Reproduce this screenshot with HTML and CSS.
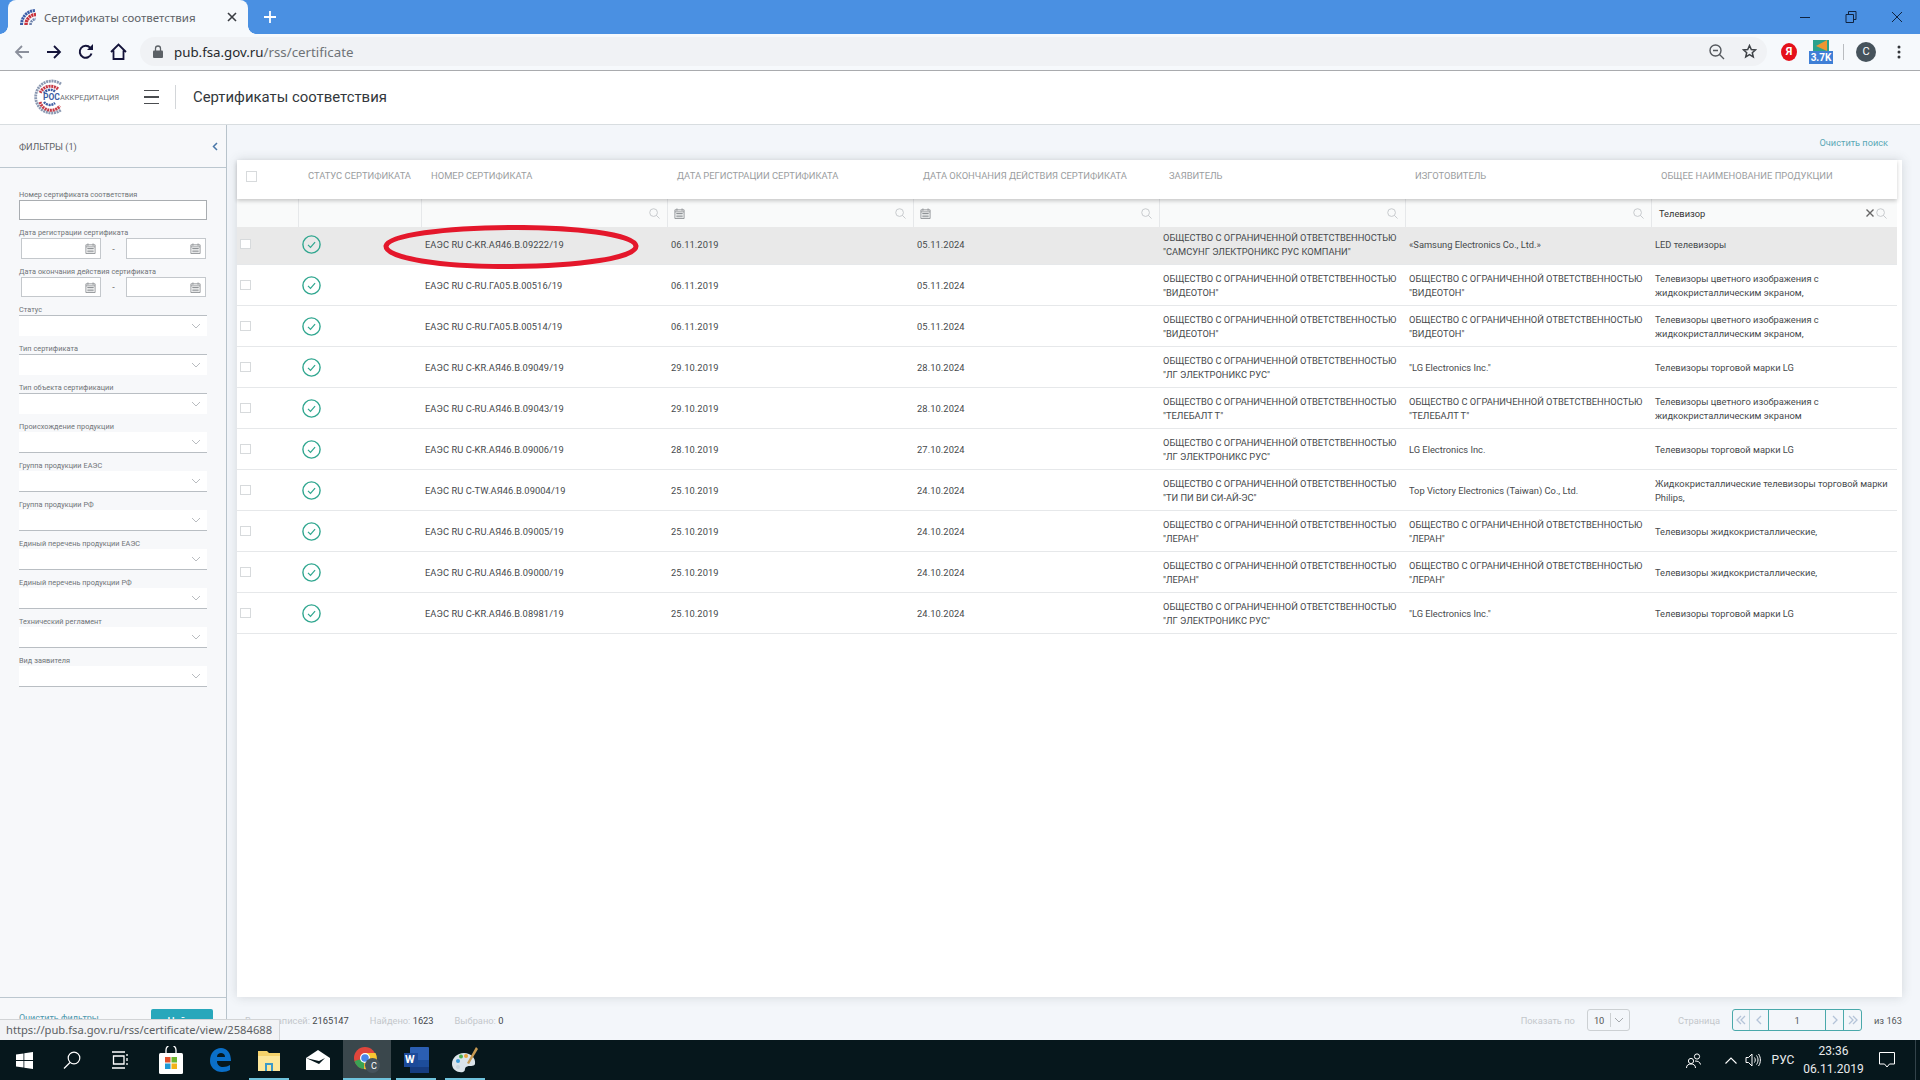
FILE: index.html
```html
<!DOCTYPE html>
<html lang="ru">
<head>
<meta charset="utf-8">
<title>Сертификаты соответствия</title>
<link rel="stylesheet" href="styles.css">
</head>
<body>
<svg class="sprite" aria-hidden="true">
  <symbol id="search" viewBox="0 0 12 12"><circle cx="5" cy="5" r="4.2" fill="none" stroke="currentColor"/><path d="M8 8l3.5 3.5" stroke="currentColor" fill="none"/></symbol>
  <symbol id="cal" viewBox="0 0 12 12"><path d="M1 2h10v9.5H1zM1 4.2h10M3.2.5v2.5M8.8.5v2.5" fill="none" stroke="currentColor"/><path d="M2.5 5.5h7v1h-7zM2.5 7.3h7v1h-7zM2.5 9.1h7v1h-7z" fill="currentColor"/></symbol>
  <symbol id="chev" viewBox="0 0 10 6"><path d="M1 1l4 4 4-4" fill="none" stroke="currentColor"/></symbol>
  <symbol id="ok" viewBox="0 0 19 19"><circle cx="9.5" cy="9.5" r="8.6" fill="none" stroke="#2fa68f" stroke-width="1.4"/><path d="M6 9.8l2.5 2.5 4.6-5.2" fill="none" stroke="#2fa68f" stroke-width="1.2"/></symbol>
  <symbol id="pg-first" viewBox="0 0 10 10"><path d="M5 1L1 5l4 4M9 1L5 5l4 4" fill="none" stroke="currentColor" stroke-width="1.3"/></symbol>
  <symbol id="pg-prev" viewBox="0 0 10 10"><path d="M7 1L3 5l4 4" fill="none" stroke="currentColor" stroke-width="1.3"/></symbol>
  <symbol id="pg-next" viewBox="0 0 10 10"><path d="M3 1l4 4-4 4" fill="none" stroke="currentColor" stroke-width="1.3"/></symbol>
  <symbol id="pg-last" viewBox="0 0 10 10"><path d="M1 1l4 4-4 4M5 1l4 4-4 4" fill="none" stroke="currentColor" stroke-width="1.3"/></symbol>
</svg>

<header class="tabstrip">
  <div class="tab">
    <svg class="favicon" width="16" height="16" viewBox="0 0 16 16"><path d="M1.500 16C1.500 8 7 2 15 1.500" fill="none" stroke="#3c5ea8" stroke-width="3" stroke-dasharray="2.200 .6"/><path d="M6 16C6 10 10 6 16 5.500" fill="none" stroke="#c8323c" stroke-width="3.400" stroke-dasharray="2.200 .6"/><path d="M10.500 16C10.500 12.500 12.500 10.500 16 10" fill="none" stroke="#6f84ad" stroke-width="2.600" stroke-dasharray="2 .8"/></svg>
    <span class="tab-title">Сертификаты соответствия</span>
    <svg class="tab-close" width="10" height="10" viewBox="0 0 10 10"><path d="M1 1l8 8M9 1l-8 8" stroke="#3a3d42" stroke-width="1.6"/></svg>
  </div>
  <svg class="new-tab" width="12" height="12" viewBox="0 0 12 12"><path d="M6 0v12M0 6h12" stroke="#fff" stroke-width="1.8"/></svg>
  <div class="win-controls">
    <svg width="12" height="12" viewBox="0 0 12 12"><path d="M1 6.5h10" stroke="#10233f" stroke-width="1"/></svg>
    <svg width="12" height="12" viewBox="0 0 12 12"><path d="M1 3.5h7.500v8H1zM3.500 3.500V.5H11v8H8.500" fill="none" stroke="#10233f"/></svg>
    <svg width="12" height="12" viewBox="0 0 12 12"><path d="M1 1l10 10M11 1L1 11" stroke="#10233f"/></svg>
  </div>
</header>

<nav class="toolbar">
  <svg class="nav-icon" width="16" height="16" viewBox="0 0 16 16"><path d="M15 8H2M8 2L2 8l6 6" fill="none" stroke="#8b909c" stroke-width="1.8"/></svg>
  <svg class="nav-icon" width="16" height="16" viewBox="0 0 16 16"><path d="M1 8h13M8 2l6 6-6 6" fill="none" stroke="#14143a" stroke-width="1.8"/></svg>
  <svg class="nav-icon" width="16" height="16" viewBox="0 0 16 16"><path d="M13.500 9.500A6 6 0 1 1 12.300 3.800" fill="none" stroke="#14143a" stroke-width="2"/><path d="M9 6h6V0z" fill="#14143a"/></svg>
  <svg class="nav-icon" width="17" height="17" viewBox="0 0 17 17"><path d="M1 9l7.500-7.500L16 9M3.500 7.500V16h10V7.500" fill="none" stroke="#14143a" stroke-width="1.800"/></svg>
  <div class="omnibox">
    <svg class="lock" width="10" height="13" viewBox="0 0 10 13"><path d="M2.500 6V3.500a2.500 2.500 0 0 1 5 0V6" fill="none" stroke="#5c6166" stroke-width="1.300"/><rect y="5.500" width="10" height="7.500" rx="1" fill="#5c6166"/></svg>
    <span class="url"><b>pub.fsa.gov.ru</b>/rss/certificate</span>
    <svg class="omni-zoom" width="16" height="16" viewBox="0 0 16 16"><circle cx="6.500" cy="6.500" r="5.500" fill="none" stroke="#55595e" stroke-width="1.400"/><path d="M10.500 10.500L15 15M4 6.500h5" stroke="#55595e" stroke-width="1.400"/></svg>
    <svg class="omni-star" width="15" height="15" viewBox="0 0 15 15"><path d="M7.500 1.500l1.800 4 4.200.4-3.200 2.800 1 4.300-3.800-2.300-3.800 2.300 1-4.300L1.500 5.900l4.200-.4z" fill="none" stroke="#3e4247" stroke-width="1.500"/></svg>
  </div>
  <span class="ya">Я</span>
  <span class="ext"><svg width="16" height="11" viewBox="0 0 16 11"><rect width="16" height="11" fill="#2ba18c"/><path d="M14 0v11L3 6z" fill="#ef9632"/></svg><em>3.7K</em></span>
  <i class="tb-divider"></i>
  <span class="avatar">C</span>
  <svg class="kebab" width="4" height="14" viewBox="0 0 4 14"><circle cx="2" cy="2" r="1.500" fill="#33363a"/><circle cx="2" cy="7" r="1.500" fill="#33363a"/><circle cx="2" cy="12" r="1.500" fill="#33363a"/></svg>
</nav>

<div class="site-header">
  <div class="logo">
    <svg width="36" height="36" viewBox="0 0 36 36"><path d="M28 5A16 16 0 1 0 28 31" fill="none" stroke="#8b99b2" stroke-width="2.800" stroke-dasharray="2 .7"/><path d="M25 10A11.500 11.500 0 0 0 7 14M7 23A11.500 11.500 0 0 0 27 27" fill="none" stroke="#c63a46" stroke-width="3" stroke-dasharray="2 .7"/><path d="M22 12.500A7.500 7.500 0 0 0 11 14M11 23A7.500 7.500 0 0 0 22 24" fill="none" stroke="#3d5ea4" stroke-width="2.400" stroke-dasharray="2 .7"/></svg>
    <span class="logo-text"><b>РОС</b>АККРЕДИТАЦИЯ</span>
  </div>
  <div class="burger"><i></i><i></i><i></i></div>
  <i class="hdr-divider"></i>
  <h1 class="page-title">Сертификаты соответствия</h1>
</div>

<div class="workspace">
  <aside class="sidebar">
    <div class="side-head">
      <span>ФИЛЬТРЫ (1)</span>
      <svg width="6" height="9" viewBox="0 0 6 9"><path d="M5 1L1.500 4.500 5 8" fill="none" stroke="#4a77a8" stroke-width="1.500"/></svg>
    </div>
    <div class="side-fields">
      <label class="field"><span>Номер сертификата соответствия</span><div class="text-input"></div></label>
      <div class="field"><span>Дата регистрации сертификата</span>
        <div class="date-row tall"><div class="date-input"><svg width="11" height="11" class="cal"><use href="#cal"/></svg></div><i class="dash">-</i><div class="date-input"><svg width="11" height="11" class="cal"><use href="#cal"/></svg></div></div></div>
      <div class="field"><span>Дата окончания действия сертификата</span>
        <div class="date-row"><div class="date-input"><svg width="11" height="11" class="cal"><use href="#cal"/></svg></div><i class="dash">-</i><div class="date-input"><svg width="11" height="11" class="cal"><use href="#cal"/></svg></div></div></div>
      <div class="field"><span>Статус</span><div class="select top"><svg width="10" height="6"><use href="#chev"/></svg></div></div>
      <div class="field"><span>Тип сертификата</span><div class="select top"><svg width="10" height="6"><use href="#chev"/></svg></div></div>
      <div class="field"><span>Тип объекта сертификации</span><div class="select top"><svg width="10" height="6"><use href="#chev"/></svg></div></div>
      <div class="field"><span>Происхождение продукции</span><div class="select"><svg width="10" height="6"><use href="#chev"/></svg></div></div>
      <div class="field"><span>Группа продукции ЕАЭС</span><div class="select"><svg width="10" height="6"><use href="#chev"/></svg></div></div>
      <div class="field"><span>Группа продукции РФ</span><div class="select"><svg width="10" height="6"><use href="#chev"/></svg></div></div>
      <div class="field"><span>Единый перечень продукции ЕАЭС</span><div class="select"><svg width="10" height="6"><use href="#chev"/></svg></div></div>
      <div class="field"><span>Единый перечень продукции РФ</span><div class="select"><svg width="10" height="6"><use href="#chev"/></svg></div></div>
      <div class="field"><span>Технический регламент</span><div class="select"><svg width="10" height="6"><use href="#chev"/></svg></div></div>
      <div class="field"><span>Вид заявителя</span><div class="select"><svg width="10" height="6"><use href="#chev"/></svg></div></div>
    </div>
    <div class="side-foot">
      <a class="clear-filters">Очистить фильтры</a>
      <button class="find">Найти</button>
    </div>
  </aside>

  <main class="content">
    <div class="content-top"><a class="clear-search">Очистить поиск</a></div>
    <section class="card">
      <div class="row head">
        <div class="hcell check"><i class="box big"></i></div>
        <div class="hcell">СТАТУС СЕРТИФИКАТА</div>
        <div class="hcell">НОМЕР СЕРТИФИКАТА</div>
        <div class="hcell">ДАТА РЕГИСТРАЦИИ СЕРТИФИКАТА</div>
        <div class="hcell">ДАТА ОКОНЧАНИЯ ДЕЙСТВИЯ СЕРТИФИКАТА</div>
        <div class="hcell">ЗАЯВИТЕЛЬ</div>
        <div class="hcell">ИЗГОТОВИТЕЛЬ</div>
        <div class="hcell">ОБЩЕЕ НАИМЕНОВАНИЕ ПРОДУКЦИИ</div>
      </div>
      <div class="row filters">
        <div class="fcell first"></div>
        <div class="fcell"></div>
        <div class="fcell"><svg class="mag" width="11" height="11"><use href="#search"/></svg></div>
        <div class="fcell"><svg class="fcal" width="11" height="11"><use href="#cal"/></svg><svg class="mag" width="11" height="11"><use href="#search"/></svg></div>
        <div class="fcell"><svg class="fcal" width="11" height="11"><use href="#cal"/></svg><svg class="mag" width="11" height="11"><use href="#search"/></svg></div>
        <div class="fcell"><svg class="mag" width="11" height="11"><use href="#search"/></svg></div>
        <div class="fcell"><svg class="mag" width="11" height="11"><use href="#search"/></svg></div>
        <div class="fcell query"><span class="qtext">Телевизор</span><svg class="qx" width="8" height="8" viewBox="0 0 8 8"><path d="M.5.5l7 7M7.500.5l-7 7" stroke="#666" stroke-width="1.400"/></svg><svg class="qmag" width="11" height="11"><use href="#search"/></svg></div>
      </div>

      <div class="row data selected">
        <div class="cell"><i class="box"></i></div><div class="cell st"><svg width="19" height="19"><use href="#ok"/></svg></div>
        <div class="cell mono">ЕАЭС RU C-KR.АЯ46.B.09222/19</div><div class="cell mono">06.11.2019</div><div class="cell mono">05.11.2024</div>
        <div class="cell">ОБЩЕСТВО С ОГРАНИЧЕННОЙ ОТВЕТСТВЕННОСТЬЮ<br>"САМСУНГ ЭЛЕКТРОНИКС РУС КОМПАНИ"</div>
        <div class="cell">«Samsung Electronics Co., Ltd.»</div><div class="cell">LED телевизоры</div>
      </div>
      <div class="row data">
        <div class="cell"><i class="box"></i></div><div class="cell st"><svg width="19" height="19"><use href="#ok"/></svg></div>
        <div class="cell mono">ЕАЭС RU C-RU.ГА05.B.00516/19</div><div class="cell mono">06.11.2019</div><div class="cell mono">05.11.2024</div>
        <div class="cell">ОБЩЕСТВО С ОГРАНИЧЕННОЙ ОТВЕТСТВЕННОСТЬЮ<br>"ВИДЕОТОН"</div>
        <div class="cell">ОБЩЕСТВО С ОГРАНИЧЕННОЙ ОТВЕТСТВЕННОСТЬЮ<br>"ВИДЕОТОН"</div>
        <div class="cell">Телевизоры цветного изображения с<br>жидкокристаллическим экраном,</div>
      </div>
      <div class="row data">
        <div class="cell"><i class="box"></i></div><div class="cell st"><svg width="19" height="19"><use href="#ok"/></svg></div>
        <div class="cell mono">ЕАЭС RU C-RU.ГА05.B.00514/19</div><div class="cell mono">06.11.2019</div><div class="cell mono">05.11.2024</div>
        <div class="cell">ОБЩЕСТВО С ОГРАНИЧЕННОЙ ОТВЕТСТВЕННОСТЬЮ<br>"ВИДЕОТОН"</div>
        <div class="cell">ОБЩЕСТВО С ОГРАНИЧЕННОЙ ОТВЕТСТВЕННОСТЬЮ<br>"ВИДЕОТОН"</div>
        <div class="cell">Телевизоры цветного изображения с<br>жидкокристаллическим экраном,</div>
      </div>
      <div class="row data">
        <div class="cell"><i class="box"></i></div><div class="cell st"><svg width="19" height="19"><use href="#ok"/></svg></div>
        <div class="cell mono">ЕАЭС RU C-KR.АЯ46.B.09049/19</div><div class="cell mono">29.10.2019</div><div class="cell mono">28.10.2024</div>
        <div class="cell">ОБЩЕСТВО С ОГРАНИЧЕННОЙ ОТВЕТСТВЕННОСТЬЮ<br>"ЛГ ЭЛЕКТРОНИКС РУС"</div>
        <div class="cell">"LG Electronics Inc."</div><div class="cell">Телевизоры торговой марки LG</div>
      </div>
      <div class="row data">
        <div class="cell"><i class="box"></i></div><div class="cell st"><svg width="19" height="19"><use href="#ok"/></svg></div>
        <div class="cell mono">ЕАЭС RU C-RU.АЯ46.B.09043/19</div><div class="cell mono">29.10.2019</div><div class="cell mono">28.10.2024</div>
        <div class="cell">ОБЩЕСТВО С ОГРАНИЧЕННОЙ ОТВЕТСТВЕННОСТЬЮ<br>"ТЕЛЕБАЛТ Т"</div>
        <div class="cell">ОБЩЕСТВО С ОГРАНИЧЕННОЙ ОТВЕТСТВЕННОСТЬЮ<br>"ТЕЛЕБАЛТ Т"</div>
        <div class="cell">Телевизоры цветного изображения с<br>жидкокристаллическим экраном</div>
      </div>
      <div class="row data">
        <div class="cell"><i class="box"></i></div><div class="cell st"><svg width="19" height="19"><use href="#ok"/></svg></div>
        <div class="cell mono">ЕАЭС RU C-KR.АЯ46.B.09006/19</div><div class="cell mono">28.10.2019</div><div class="cell mono">27.10.2024</div>
        <div class="cell">ОБЩЕСТВО С ОГРАНИЧЕННОЙ ОТВЕТСТВЕННОСТЬЮ<br>"ЛГ ЭЛЕКТРОНИКС РУС"</div>
        <div class="cell">LG Electronics Inc.</div><div class="cell">Телевизоры торговой марки LG</div>
      </div>
      <div class="row data">
        <div class="cell"><i class="box"></i></div><div class="cell st"><svg width="19" height="19"><use href="#ok"/></svg></div>
        <div class="cell mono">ЕАЭС RU C-TW.АЯ46.B.09004/19</div><div class="cell mono">25.10.2019</div><div class="cell mono">24.10.2024</div>
        <div class="cell">ОБЩЕСТВО С ОГРАНИЧЕННОЙ ОТВЕТСТВЕННОСТЬЮ<br>"ТИ ПИ ВИ СИ-АЙ-ЭС"</div>
        <div class="cell">Top Victory Electronics (Taiwan) Co., Ltd.</div>
        <div class="cell">Жидкокристаллические телевизоры торговой марки<br>Philips,</div>
      </div>
      <div class="row data">
        <div class="cell"><i class="box"></i></div><div class="cell st"><svg width="19" height="19"><use href="#ok"/></svg></div>
        <div class="cell mono">ЕАЭС RU C-RU.АЯ46.B.09005/19</div><div class="cell mono">25.10.2019</div><div class="cell mono">24.10.2024</div>
        <div class="cell">ОБЩЕСТВО С ОГРАНИЧЕННОЙ ОТВЕТСТВЕННОСТЬЮ<br>"ЛЕРАН"</div>
        <div class="cell">ОБЩЕСТВО С ОГРАНИЧЕННОЙ ОТВЕТСТВЕННОСТЬЮ<br>"ЛЕРАН"</div>
        <div class="cell">Телевизоры жидкокристаллические,</div>
      </div>
      <div class="row data">
        <div class="cell"><i class="box"></i></div><div class="cell st"><svg width="19" height="19"><use href="#ok"/></svg></div>
        <div class="cell mono">ЕАЭС RU C-RU.АЯ46.B.09000/19</div><div class="cell mono">25.10.2019</div><div class="cell mono">24.10.2024</div>
        <div class="cell">ОБЩЕСТВО С ОГРАНИЧЕННОЙ ОТВЕТСТВЕННОСТЬЮ<br>"ЛЕРАН"</div>
        <div class="cell">ОБЩЕСТВО С ОГРАНИЧЕННОЙ ОТВЕТСТВЕННОСТЬЮ<br>"ЛЕРАН"</div>
        <div class="cell">Телевизоры жидкокристаллические,</div>
      </div>
      <div class="row data">
        <div class="cell"><i class="box"></i></div><div class="cell st"><svg width="19" height="19"><use href="#ok"/></svg></div>
        <div class="cell mono">ЕАЭС RU C-KR.АЯ46.B.08981/19</div><div class="cell mono">25.10.2019</div><div class="cell mono">24.10.2024</div>
        <div class="cell">ОБЩЕСТВО С ОГРАНИЧЕННОЙ ОТВЕТСТВЕННОСТЬЮ<br>"ЛГ ЭЛЕКТРОНИКС РУС"</div>
        <div class="cell">"LG Electronics Inc."</div><div class="cell">Телевизоры торговой марки LG</div>
      </div>

      <svg class="annotation" width="256" height="44" viewBox="0 0 256 44"><path d="M3 21C6 10 62 3 126 2.500C190 2 251 9 253 21C254 33 196 41 128 41.500C58 42 2 33 3 21Z" fill="none" stroke="#e4172b" stroke-width="5"/></svg>
    </section>
    <footer class="content-foot">
      <span class="stat">Всего записей: <b>2165147</b></span>
      <span class="stat">Найдено: <b>1623</b></span>
      <span class="stat">Выбрано: <b>0</b></span>
      <span class="show-by">Показать по</span>
      <div class="per-page"><span>10</span><i></i><svg width="10" height="6"><use href="#chev"/></svg></div>
      <span class="page-label">Страница</span>
      <div class="pager">
        <span class="pg"><svg width="10" height="10"><use href="#pg-first"/></svg></span>
        <span class="pg"><svg width="10" height="10"><use href="#pg-prev"/></svg></span>
        <span class="pg-num">1</span>
        <span class="pg"><svg width="10" height="10"><use href="#pg-next"/></svg></span>
        <span class="pg"><svg width="10" height="10"><use href="#pg-last"/></svg></span>
      </div>
      <span class="total">из 163</span>
    </footer>
  </main>
</div>

<div class="status-bubble">https://pub.fsa.gov.ru/rss/certificate/view/2584688</div>

<footer class="taskbar">
  <div class="task"><svg width="17" height="17" viewBox="0 0 17 17"><path d="M0 2.500L7.500 1.400V8H0zM8.300 1.300L17 0v8H8.300zM0 9h7.500v6.600L0 14.500zM8.300 9H17v8l-8.700-1.300z" fill="#fff"/></svg></div>
  <div class="task"><svg width="18" height="18" viewBox="0 0 18 18"><circle cx="11" cy="7" r="5.800" fill="none" stroke="#fff" stroke-width="1.200"/><path d="M7 11.500L1 17.500" stroke="#fff" stroke-width="1.200"/></svg></div>
  <div class="task"><svg width="17" height="18" viewBox="0 0 17 18"><path d="M0 1h13M0 17h13M1.500 5h10.500v8H1.500zM15 3v2M15 7v3M15 12v2" fill="none" stroke="#fff" stroke-width="1.300"/></svg></div>
  <div class="task store"><svg width="24" height="28" viewBox="0 0 24 28"><path d="M7 7V4a5 5 0 0 1 10 0v3" fill="none" stroke="#fff" stroke-width="1.300"/><rect y="7" width="24" height="21" rx="1.500" fill="#fff"/><rect x="6" y="11" width="5.500" height="5.500" fill="#e2502c"/><rect x="12.500" y="11" width="5.500" height="5.500" fill="#6cb62e"/><rect x="6" y="17.500" width="5.500" height="5.500" fill="#1f9ad6"/><rect x="12.500" y="17.500" width="5.500" height="5.500" fill="#f3b21a"/></svg></div>
  <div class="task"><svg width="22" height="24" viewBox="0 0 22 24"><path d="M1 13C1 5 6 0 12 0c6 0 10 5 10 13H8c0 4 3 6 6 6 3 0 5-1 7-2v5c-2 1-5 2-8 2-7 0-12-5-12-11zM8 9h8c0-3-2-4-4-4S8 6 8 9z" fill="#0a6fc8"/></svg></div>
  <div class="task open"><svg width="22" height="21" viewBox="0 0 22 21"><path d="M0 1h9l2 2h11v18H0z" fill="#f4d26b"/><path d="M0 6h22v15H0z" fill="#fce69a"/><path d="M7 13h8v8H7z" fill="#3b99c9"/><path d="M9 15h4v6H9z" fill="#fce69a"/></svg></div>
  <div class="task"><svg width="24" height="20" viewBox="0 0 24 20"><path d="M0 8L12 0l12 8v12H0z" fill="#fff"/><path d="M0 8l13 6 6-6-6 3z" fill="#06171c"/></svg></div>
  <div class="task active"><svg width="28" height="28" viewBox="0 0 28 28"><circle cx="12" cy="12" r="11" fill="#e0463c"/><path d="M12 12L1.500 15A11 11 0 0 0 11 23z" fill="#3ba354"/><path d="M12 7h10.500A11 11 0 0 1 11 23z" fill="#f8c531"/><circle cx="12" cy="12" r="5" fill="#fff"/><circle cx="12" cy="12" r="3.800" fill="#4a86e8"/><circle cx="19.500" cy="19.500" r="7.500" fill="#46535c"/></svg><span class="chrome-c">C</span></div>
  <div class="task open"><svg width="25" height="26" viewBox="0 0 25 26"><rect x="6" width="19" height="26" rx="1" fill="#2b5fb3"/><rect x="6" y="13" width="19" height="7" fill="#1d4d9b"/><rect x="6" y="20" width="19" height="6" fill="#163c80"/><rect y="6" width="14" height="14" fill="#1c4a9a"/></svg><span class="word-w">W</span></div>
  <div class="task open"><svg width="26" height="28" viewBox="0 0 26 28"><path d="M12 7C5 7 0 12 0 18c0 6 6 9 11 8 3-1 1-3 3-5 3-2 8 0 9-3 1-6-4-11-11-11z" fill="#dbe4ea"/><circle cx="6" cy="15" r="2" fill="#3a9ad9"/><circle cx="9" cy="10.500" r="2" fill="#4caf50"/><circle cx="14" cy="10" r="2" fill="#e8a33d"/><circle cx="6" cy="21" r="2" fill="#c9d6de"/><path d="M24 1l-9 16 2 1 9-15z" fill="#c79a52"/></svg></div>
  <div class="tray">
    <svg class="tray-people" width="15" height="15" viewBox="0 0 15 15"><circle cx="5" cy="8" r="2.600" fill="none" stroke="#fff"/><circle cx="11" cy="3.500" r="2.600" fill="none" stroke="#fff"/><path d="M0.500 15c0-3 2-4 4.500-4s4.500 1 4.500 4M9 8c3 0 5 1 5.500 3.500" fill="none" stroke="#fff"/></svg>
    <svg class="tray-caret" width="12" height="7" viewBox="0 0 12 7"><path d="M.5 6.500L6 1l5.500 5.500" fill="none" stroke="#fff" stroke-width="1.100"/></svg>
    <svg class="tray-sound" width="16" height="14" viewBox="0 0 16 14"><path d="M1 4.500h2.500L7 1v12L3.500 9.500H1zM9.500 4.500c1 1.500 1 3.500 0 5M11.500 2.500c2 2.500 2 6.500 0 9M13.500 1c2.500 3.500 2.500 8.500 0 12" fill="none" stroke="#fff"/></svg>
    <span class="tray-lang">РУС</span>
    <div class="clock"><span>23:36</span><span>06.11.2019</span></div>
    <svg class="tray-note" width="16" height="16" viewBox="0 0 16 16"><path d="M.5.500h15v11.500h-5l-2.500 3-2.500-3h-5z" fill="none" stroke="#fff"/></svg>
    <i class="show-desktop"></i>
  </div>
</footer>
</body>
</html>
```

FILE: styles.css
```css
* { box-sizing: border-box; }
html, body { margin: 0; height: 100%; }
body {
  height: 1080px;
  width: 1920px;
  overflow: hidden;
  display: flex;
  flex-direction: column;
  position: relative;
  font-family: Roboto, "Liberation Sans", sans-serif;
  background: #f3f6fa;
  color: #444;
}
i, em { font-style: normal; }
.sprite { display: none; }

/* browser chrome */
.tabstrip {
  height: 34px;
  flex: none;
  background: #4a90e2;
  display: flex;
  align-items: center;
  padding-left: 8px;
}
.tab {
  width: 240px;
  height: 34px;
  background: #f6f9fc;
  border-radius: 8px 8px 0 0;
  display: flex;
  align-items: center;
  padding: 0 11px 0 12px;
  position: relative;
}
.tab::before, .tab::after {
  content: "";
  position: absolute;
  bottom: 0;
  width: 8px;
  height: 8px;
}
.tab::before { left: -8px; background: radial-gradient(circle at 0 0, #4a90e2 7.5px, #f6f9fc 8px); }
.tab::after { right: -8px; background: radial-gradient(circle at 100% 0, #4a90e2 7.5px, #f6f9fc 8px); }
.favicon { flex: none; }
.tab-title { flex: 1; margin-left: 8px; font-size: 11.500px; color: #5f6368; white-space: nowrap; font-family: "Noto Sans", Roboto, sans-serif; }
.tab-close { flex: none; }
.new-tab { margin-left: 16px; }
.win-controls { margin-left: auto; display: flex; align-items: center; gap: 34px; padding-right: 17px; }

.toolbar {
  height: 37px;
  flex: none;
  background: #f6f9fc;
  border-bottom: 1px solid #a9abae;
  display: flex;
  align-items: center;
  padding: 0 0 1px 14px;
}
.nav-icon { flex: none; margin-right: 16px; }
.toolbar .nav-icon:nth-child(4) { margin-right: 13px; }
.omnibox {
  flex: none;
  width: 1627px;
  height: 29px;
  border-radius: 15px;
  background: #f0f2f5;
  display: flex;
  align-items: center;
  padding-left: 13px;
}
.lock { flex: none; }
.url { margin-left: 11px; font-size: 13.300px; color: #6e7377; font-family: "Noto Sans", Roboto, sans-serif; }
.url b { font-weight: 400; color: #25282c; }
.omni-zoom { margin-left: auto; }
.omni-star { margin: 0 10px 0 17px; }
.ya {
  margin-left: 14px;
  width: 16px;
  height: 18px;
  border-radius: 50%;
  background: #e5111b;
  color: #fff;
  font-size: 11px;
  font-weight: 700;
  text-align: center;
  line-height: 18px;
}
.ext {
  margin-left: 12px;
  width: 24px;
  height: 24px;
  display: flex;
  flex-direction: column;
  align-items: center;
  justify-content: flex-end;
}
.ext em {
  width: 24px;
  height: 13px;
  background: #3f7fd6;
  color: #fff;
  font-size: 10px;
  font-weight: 700;
  line-height: 13px;
  text-align: center;
}
.tb-divider { margin-left: 10px; width: 1px; height: 16px; background: #b9bcc0; }
.avatar {
  margin-left: 12px;
  width: 20px;
  height: 20px;
  border-radius: 50%;
  background: #46535c;
  color: #fff;
  font-size: 11px;
  line-height: 20px;
  text-align: center;
}
.kebab { margin-left: 21px; }

/* site header */
.site-header {
  height: 54px;
  flex: none;
  background: #fff;
  border-bottom: 1px solid #d8dde0;
  display: flex;
  align-items: center;
  padding: 0 0 1px 33px;
}
.logo { width: 85px; flex: none; display: flex; align-items: center; }
.logo svg { flex: none; }
.logo-text { margin-left: -26px; font-size: 7.500px; color: #6d7176; white-space: nowrap; }
.logo-text b { color: #3d5ea4; font-weight: 700; font-size: 8.500px; }
.burger { margin-left: 26px; width: 15px; display: flex; flex-direction: column; gap: 5px; }
.burger i { height: 1.500px; background: #4a4d50; }
.hdr-divider { margin-left: 16px; width: 1px; height: 24px; background: #d3d6d9; }
.page-title { margin: 0 0 0 17px; font-size: 14.900px; font-weight: 400; color: #33373b; }

.workspace { flex: 1; min-height: 0; display: flex; }

/* sidebar */
.sidebar {
  width: 227px;
  flex: none;
  background: #f7f8fa;
  border-right: 1px solid #b8c3cb;
  display: flex;
  flex-direction: column;
  position: relative;
  z-index: 1;
}
.side-head {
  height: 43px;
  flex: none;
  border-bottom: 1px solid #bcc7cf;
  display: flex;
  align-items: center;
  justify-content: space-between;
  padding: 0 8px 0 19px;
  font-size: 9.200px;
  color: #5e6266;
}
.side-fields { flex: 1; padding: 14px 19px 0; }
.field { display: block; }
.field > span { display: block; padding-top: 8px; height: 18px; font-size: 7.300px; line-height: 10px; color: #6f7377; letter-spacing: .05px; white-space: nowrap; }
.text-input { height: 20px; background: #fff; border: 1px solid #a9adb1; }
.date-row { height: 20px; display: flex; align-items: stretch; justify-content: space-between; padding: 0 1px 0 2px; }
.date-row.tall { height: 21px; }
.date-input { width: 80px; background: #fff; border: 1px solid #c4c8cc; display: flex; align-items: center; justify-content: flex-end; padding-right: 4px; }
.cal { color: #8f9396; }
.dash { align-self: center; font-size: 9px; color: #666; }
.select { height: 21px; background: #fff; display: flex; align-items: center; justify-content: flex-end; padding-right: 6px; color: #b9bcc0; border-bottom: 1px solid #b9bec3; }
.select.top { border-bottom: 0; border-top: 1px solid #b9bec3; }
.side-foot {
  height: 43px;
  flex: none;
  border-top: 1px solid #bcc7cf;
  display: flex;
  align-items: flex-start;
  justify-content: space-between;
  padding: 11px 13px 0 19px;
}
.clear-filters { font-size: 9px; color: #4b97ad; margin-top: 4px; }
.find { width: 62px; height: 24px; border: 0; border-radius: 2px; background: #28a7bb; color: #fff; font: 500 10px Roboto, sans-serif; padding: 0; }

/* main */
.content { flex: 1; min-width: 0; display: flex; flex-direction: column; padding: 0 18px 0 10px; }
.content-top { height: 34px; margin-bottom: 1px; flex: none; display: flex; align-items: center; justify-content: flex-end; padding: 0 14px 0 0; }
.clear-search { font-size: 9.200px; color: #5aa8b6; }
.card {
  height: 837px;
  flex: none;
  background: #fff;
  box-shadow: 0 0 10px rgba(60, 70, 80, .18);
  position: relative;
}
.row { display: grid; grid-template-columns: 61px 123px repeat(6, 246px); width: 1660px; }
.head { height: 39px; background: #fff; position: relative; z-index: 1; box-shadow: 0 2px 4px rgba(0, 0, 0, .2); }
.hcell { padding: 10px 0 0 10px; font-size: 9.400px; line-height: 12px; color: #9a9da0; white-space: nowrap; }
.hcell.check { padding: 11px 0 0 9px; }
.box { display: block; width: 11px; height: 10px; background: #fff; border: 1px solid #d7dadc; }
.box.big { height: 11px; }
.filters { height: 28px; background: #f9fafa; }
.fcell { border-left: 1px solid #e6e8ea; display: flex; align-items: center; padding: 0 7px 0 6px; color: #c3c6c9; }
.fcell.first { border-left: 0; }
.mag { margin-left: auto; }
.fcal { color: #8f9396; }
.qtext { font-size: 9.300px; color: #333; margin-left: 1px; }
.qx { margin-left: auto; }
.qmag { margin: 0 3px 0 2px; }
.data { height: 41px; border-bottom: 1px solid #e6e8ea; font-size: 9.300px; line-height: 14px; color: #46494c; }
.data.selected { height: 38px; padding-bottom: 3px; background: #e9e9e9; }
.cell { display: flex; flex-direction: column; justify-content: center; padding: 2px 0 0 4px; white-space: nowrap; }
.cell:first-child { padding: 0 0 0 3px; }
.cell.st { padding-top: 0; }
.cell.mono { letter-spacing: .09px; }

.annotation { position: absolute; left: 146px; top: 65px; z-index: 2; }

/* footer of the content */
.content-foot { flex: 1; display: flex; align-items: center; padding: 3px 0 0 8px; font-size: 9.300px; color: #c3c7cb; }
.stat { margin-right: 21px; white-space: nowrap; }
.stat b { font-weight: 400; color: #44474a; }
.show-by { margin-left: auto; }
.per-page { margin-left: 12px; width: 43px; height: 22px; border: 1px solid #ccd0d3; border-radius: 3px; display: flex; align-items: center; padding-left: 6px; color: #555; }
.per-page i { margin-left: 6px; width: 1px; height: 14px; background: #ccd0d3; }
.per-page svg { margin-left: 3px; color: #a5a9ad; }
.page-label { margin-left: 48px; }
.pager { margin-left: 12px; width: 130px; height: 22px; border: 1px solid #4aa9ab; border-radius: 3px; display: grid; grid-template-columns: 17px 18px 1fr 18px 17px; align-items: stretch; color: #b4c3d8; }
.pg { display: flex; align-items: center; justify-content: center; }
.pg:nth-child(1) { border-right: 1px solid #b9d6da; }
.pg-num { display: flex; align-items: center; justify-content: center; border-left: 1px solid #4aa9ab; border-right: 1px solid #4aa9ab; font-size: 9.300px; color: #55585b; }
.pg:nth-child(4) { border-right: 1px solid #4aa9ab; }
.total { width: 40px; padding-left: 12px; color: #55585b; white-space: nowrap; }

.status-bubble {
  position: absolute;
  left: 0;
  bottom: 40px;
  width: 280px;
  height: 21px;
  background: #f2f3f5;
  border-top: 1px solid #d2d4d6;
  border-right: 1px solid #d2d4d6;
  border-top-right-radius: 2px;
  padding-left: 6px;
  font-size: 11.200px;
  line-height: 19px;
  color: #5b5f63;
  font-family: "Noto Sans", Roboto, sans-serif;
  white-space: nowrap;
  z-index: 3;
}

/* windows taskbar */
.taskbar { height: 40px; flex: none; background: #06171c; display: flex; color: #e9ebec; }
.task { width: 48px; height: 40px; display: flex; align-items: center; justify-content: center; position: relative; }
.task.store { margin-left: 3px; }
.task + .task.open, .task + .task.active, .store ~ .task { margin-left: 1px; }
.task.open::after { content: ""; position: absolute; left: 4px; right: 4px; bottom: 0; height: 2px; background: #6fc3dc; }
.task.active { background: #3a474c; }
.task.active::after { content: ""; position: absolute; left: 0; right: 0; bottom: 0; height: 2px; background: #6fc3dc; }
.chrome-c { position: absolute; left: 28px; top: 21px; font-size: 9px; line-height: 11px; color: #fff; }
.word-w { position: absolute; left: 13px; top: 13px; font-size: 11px; line-height: 14px; font-weight: 700; color: #fff; }
.tray { margin-left: auto; display: flex; align-items: center; }
.tray-people { margin-right: 24px; }
.tray-caret { margin-right: 8.500px; }
.tray-sound { margin-right: 4px; }
.tray-lang { width: 36px; font-size: 12px; text-align: center; }
.clock { width: 65px; display: flex; flex-direction: column; align-items: center; gap: 3px; font-size: 12px; line-height: 15px; }
.tray-note { margin: 0 13px; }
.show-desktop { width: 5px; height: 40px; border-left: 1px solid #33434a; margin-left: 7px; }
```
